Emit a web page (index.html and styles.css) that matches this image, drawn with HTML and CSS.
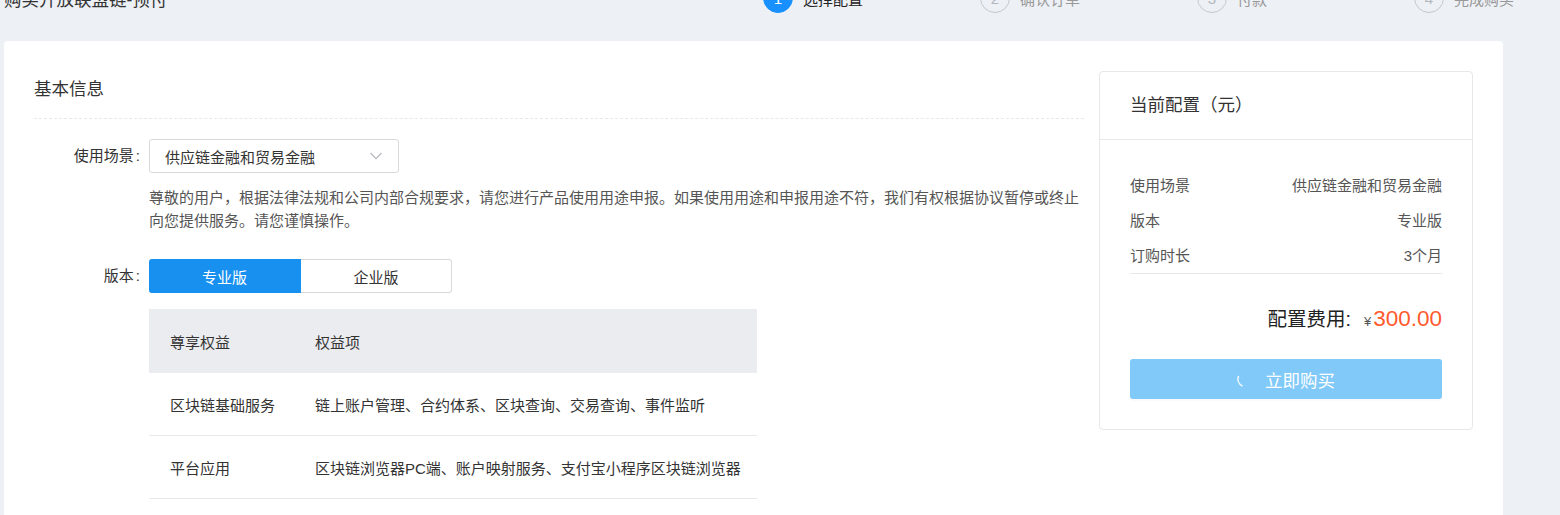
FILE: index.html
```html
<!DOCTYPE html>
<html lang="zh-CN">
<head>
<meta charset="utf-8">
<title>购买开放联盟链-预付</title>
<link rel="stylesheet" href="styles.css">
</head>
<body>
<header class="top">
  <div class="title">购买开放联盟链-预付</div>
  <ol class="steps">
    <li class="step active"><span class="num">1</span><span class="step-label">选择配置</span></li>
    <li class="step"><span class="num">2</span><span class="step-label">确认订单</span></li>
    <li class="step"><span class="num">3</span><span class="step-label">付款</span></li>
    <li class="step"><span class="num">4</span><span class="step-label">完成购买</span></li>
  </ol>
</header>

<div class="card">
  <section class="main">
    <h2 class="sec-title">基本信息</h2>

    <div class="form-row">
      <div class="form-label">使用场景<span class="colon">:</span></div>
      <div class="form-ctrl">
        <div class="select">
          <span>供应链金融和贸易金融</span>
          <svg class="chev" width="12" height="8" viewBox="0 0 12 8"><polyline points="0.6,1 6,6.6 11.4,1" fill="none" stroke="#b4b7bd" stroke-width="1.2"/></svg>
        </div>
        <p class="notice">尊敬的用户，根据法律法规和公司内部合规要求，请您进行产品使用用途申报。如果使用用途和申报用途不符，我们有权根据协议暂停或终止向您提供服务。请您谨慎操作。</p>
      </div>
    </div>

    <div class="form-row row-version">
      <div class="form-label">版本<span class="colon">:</span></div>
      <div class="form-ctrl">
        <div class="seg">
          <span class="seg-btn on">专业版</span>
          <span class="seg-btn">企业版</span>
        </div>
        <table class="rights">
          <thead>
            <tr><th class="c1">尊享权益</th><th>权益项</th></tr>
          </thead>
          <tbody>
            <tr><td class="c1">区块链基础服务</td><td>链上账户管理、合约体系、区块查询、交易查询、事件监听</td></tr>
            <tr><td class="c1">平台应用</td><td>区块链浏览器PC端、账户映射服务、支付宝小程序区块链浏览器</td></tr>
          </tbody>
        </table>
      </div>
    </div>
  </section>

  <aside class="summary">
    <div class="sum-head">当前配置（元）</div>
    <div class="sum-body">
      <div class="sum-list">
        <div class="sum-row"><span>使用场景</span><span>供应链金融和贸易金融</span></div>
        <div class="sum-row"><span>版本</span><span>专业版</span></div>
        <div class="sum-row"><span>订购时长</span><span>3个月</span></div>
      </div>
      <div class="price">
        <span class="price-label">配置费用:</span>
        <span class="yen">¥</span>
        <span class="amount">300.00</span>
      </div>
      <button class="buy" type="button">
        <svg class="spin" width="18" height="18" viewBox="0 0 18 18"><path d="M1.4 6.5 A8 8 0 0 0 5 15.9" fill="none" stroke="#ffffff" stroke-width="1.6" stroke-linecap="round" opacity="0.85"/></svg>
        <span>立即购买</span>
      </button>
    </div>
  </aside>
</div>
</body>
</html>
```

FILE: styles.css
```css
html, body {
  margin: 0;
  padding: 0;
}

body {
  background: #edf0f5;
  font-family: "Liberation Sans", "Noto Sans CJK SC", sans-serif;
  color: #333;
  overflow: hidden;
}

.top {
  display: grid;
  grid-template-columns: 759px 1fr;
  align-items: center;
  height: 40px;
  margin-top: -20px;
  padding-left: 4px;
}

.title {
  font-size: 17.5px;
  line-height: 40px;
  color: #333;
}

.steps {
  display: flex;
  list-style: none;
  margin: -4px 0 0 0;
  padding: 0;
}

.step {
  flex: none;
  width: 217px;
  display: flex;
  align-items: center;
}

.num {
  box-sizing: border-box;
  width: 30px;
  height: 30px;
  border: 1px solid #c3c8d0;
  border-radius: 50%;
  display: flex;
  align-items: center;
  justify-content: center;
  font-size: 15px;
  color: #b2b7bf;
  margin-right: 10px;
}

.step-label {
  font-size: 15px;
  color: #999;
}

.step.active .num {
  background: #1890ff;
  border-color: #1890ff;
  color: #fff;
}

.step.active .step-label {
  color: #222;
}

.card {
  margin: 21px 57px 0 4px;
  background: #fff;
  border-radius: 4px;
  padding: 30px 30px 40px;
  display: flex;
  gap: 15px;
  align-items: flex-start;
}

.main {
  flex: 1;
  min-width: 0;
}

.sec-title {
  margin: 0;
  font-size: 17.5px;
  font-weight: normal;
  line-height: 36px;
  padding-bottom: 11px;
  border-bottom: 1px dashed #e6e8eb;
  color: #333;
}

.form-row {
  display: flex;
  margin-top: 20px;
}

.row-version {
  margin-top: 27px;
}

.form-label {
  box-sizing: border-box;
  flex: none;
  width: 115px;
  padding-right: 9px;
  text-align: right;
  font-size: 15px;
  line-height: 34px;
  color: #333;
}

.colon {
  margin-left: 2px;
}

.form-ctrl {
  flex: 1;
  min-width: 0;
}

.select {
  box-sizing: border-box;
  width: 250px;
  height: 34px;
  border: 1px solid #d9d9d9;
  border-radius: 3px;
  padding: 0 16px 0 15px;
  display: flex;
  align-items: center;
  justify-content: space-between;
  font-size: 15px;
  color: #333;
}

.chev {
  display: block;
}

.notice {
  margin: 13px 0 0;
  font-size: 15px;
  line-height: 23px;
  color: #555;
}

.seg {
  display: flex;
  height: 34px;
}

.seg-btn {
  box-sizing: border-box;
  width: 151px;
  height: 34px;
  display: flex;
  align-items: center;
  justify-content: center;
  font-size: 15px;
  color: #333;
  border: 1px solid #d9d9d9;
  border-left: none;
  border-radius: 0 3px 3px 0;
}

.seg-btn.on {
  width: 152px;
  background: #1890f0;
  border-color: #1890f0;
  color: #fff;
  border-radius: 3px 0 0 3px;
}

.rights {
  margin-top: 16px;
  width: 608px;
  border-collapse: collapse;
  font-size: 15px;
  color: #333;
}

.rights th {
  height: 64px;
  background: #ebecf0;
  text-align: left;
  font-weight: normal;
  padding: 0;
}

.rights td {
  height: 62px;
  padding: 0;
  border-bottom: 1px solid #e8e8e8;
}

.rights .c1 {
  width: 145px;
  padding-left: 21px;
}

.summary {
  flex: none;
  width: 374px;
  box-sizing: border-box;
  border: 1px solid #e8e8e8;
  border-radius: 4px;
}

.sum-head {
  font-size: 17.5px;
  line-height: 67px;
  padding: 0 30px;
  border-bottom: 1px solid #e8e8e8;
  color: #333;
}

.sum-body {
  padding: 28px 30px 30px;
}

.sum-list {
  border-bottom: 1px solid #e8e8e8;
}

.sum-row {
  display: flex;
  justify-content: space-between;
  font-size: 15px;
  line-height: 35px;
  color: #555;
}

.price {
  display: flex;
  justify-content: flex-end;
  align-items: baseline;
  padding-top: 25px;
  height: 40px;
  line-height: 40px;
}

.price-label {
  font-size: 19.5px;
  color: #222;
}

.yen {
  font-size: 13px;
  color: #555;
  margin: 0 2px 0 13px;
}

.amount {
  font-size: 22.5px;
  color: #ff5a2e;
}

.buy {
  margin-top: 20px;
  width: 100%;
  height: 40px;
  border: none;
  border-radius: 3px;
  background: #80c9f8;
  color: #fff;
  font-family: inherit;
  font-size: 17.5px;
  display: flex;
  align-items: center;
  justify-content: center;
  gap: 10px;
  padding: 0;
  box-shadow: 0 2px 0 rgba(0, 0, 0, 0.02);
}

.spin {
  display: block;
}
```
